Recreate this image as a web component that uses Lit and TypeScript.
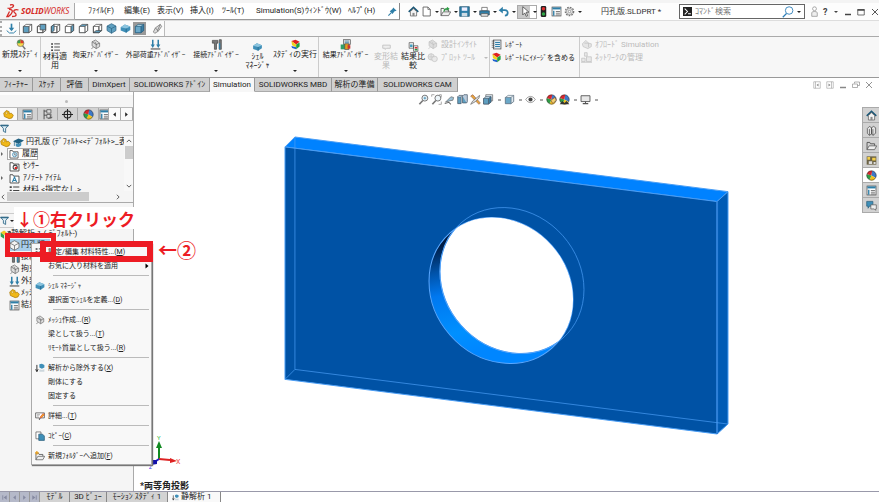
import { LitElement, html, css, svg } from "lit";
import { customElement, property } from "lit/decorators.js";
import { classMap } from "lit/directives/class-map.js";

const B = "#2f7fa8";
const K = "#444";
const cube = (f: string, t: string, r: string, s: string) => svg`
  <path d="M2 5 L6 2 H14 V11 L10 14 H2Z" fill="${t}" stroke="${s}"/>
  <path d="M10 5 L14 2 V11 L10 14Z" fill="${r}" stroke="${s}"/>
  <path d="M2 5 H10 V14 H2Z" fill="${f}" stroke="${s}"/>`;
const iso = (f: string, s: string) => svg`
  <path d="M8 1 L14.500 4.500 V11 L8 15 L1.500 11 V4.500Z" fill="${f}" stroke="${s}"/>
  <path d="M1.500 4.500 L8 8 L14.500 4.500 M8 8 V15" fill="none" stroke="${s}"/>`;
const ball = svg`
  <path d="M8 8 L1.200 6 A7 7 0 0 1 9 1.100Z" fill="#d8262c"/>
  <path d="M8 8 L9 1.100 A7 7 0 0 1 14 11.500Z" fill="#3c78c8"/>
  <path d="M8 8 L14 11.500 A7 7 0 0 1 5 14.300Z" fill="#f2c21c"/>
  <path d="M8 8 L5 14.300 A7 7 0 0 1 1.200 6Z" fill="#2f9e46"/>
  <circle cx="8" cy="8" r="6.800" fill="none" stroke="#333" stroke-width=".8"/>`;
const lines = svg`<path d="M1 3h3M1 8h3M1 13h3" stroke="${K}" stroke-width="2.400"/><path d="M6 3h9M6 8h9M6 13h9" stroke="${K}" stroke-width="1.500"/>`;
const sheet = svg`<rect x="1.500" y="1.500" width="13" height="13" fill="#fff" stroke="${K}"/><path d="M2 3.500h12" stroke="${B}" stroke-width="3"/><path d="M4 7v7" stroke="${B}" stroke-width="2"/><path d="M7 8h6M7 10.500h6M7 13h6" stroke="${K}"/>`;
const clampPart = (c: string) => svg`<path d="M3 4 L8 1.500 L14 6 L14 11 L9 14 L3 10Z" fill="#ddd" stroke="${c}"/><path d="M3 4 L9 8 L14 6 M9 8 V14 M5 12 L2 14 M7 4 L10 9" fill="none" stroke="${c}"/>`;
const loads = svg`<path d="M4 1v9M12 1v9" stroke="${B}" stroke-width="2.200"/><path d="M1 8h6l-3 5zM9 8h6l-3 5z" fill="${B}"/><path d="M1 14.500h14" stroke="${K}" stroke-width="1.500"/>`;
const bolts = svg`<path d="M2 2h8v4h-2v9h-3V6H2zM12 1h3v14h-3z" fill="#777" stroke="${K}"/><path d="M12.500 6v9" stroke="${B}" stroke-width="2"/>`;
const heat = svg`<path d="M2 3 L8 1 L14 4 L9 8Z" fill="#e02020"/><path d="M2 3 L9 8 V12 L3 9Z" fill="#f0d020"/><path d="M9 8 L14 5 V11 L9 15Z" fill="#20a040"/><path d="M2 10 L9 12 V15 L3 13Z" fill="#2060d0"/>`;
const folder = (m: unknown) => svg`<path d="M1.500 2.500h4l1 2h8v10h-13z" fill="#fff" stroke="${K}" stroke-width="1.300"/>${m}`;
const openFolder = svg`<path d="M1.500 14V3.500h4l1 2h6v3" fill="none" stroke="${K}" stroke-width="1.200"/><path d="M4.500 8.500h11l-3 5.500h-11z" fill="#eee" stroke="${K}"/>`;
const part = svg`<path d="M1 6 L5 2 L9 4 L9 7 L12 6 L15 9 L13 13 L9 14 L2 11Z" fill="#f0b818" stroke="#a87400"/><circle cx="5" cy="6" r="1.500" fill="#fff3b0" stroke="#a87400" stroke-width=".7"/>`;
const glass = svg`<circle cx="10" cy="6" r="4.300" fill="#eef6fa" stroke="#777" stroke-width="1.400"/><path d="M7 9.500 L2 15" stroke="#777" stroke-width="2.400"/>`;

const ICONS: Record<string, unknown> = {
  down: svg`<path d="M8 1v9" stroke="${B}" stroke-width="2.400"/><path d="M4 7h8l-4 5z" fill="${B}"/><path d="M1 11 L5 14.500 H11 L15 11" fill="none" stroke="${B}" stroke-width="1.400"/>`,
  cFront: cube("#5f9fc0", "#fff", "#fff", K),
  cBack: svg`${cube("none", "#fff", "#fff", K)}<path d="M6 2h8v8H6z" fill="#5f9fc0" stroke="${K}"/>`,
  cLeft: svg`${cube("none", "#fff", "#fff", K)}<path d="M2 5l4-3v9l-4 3z" fill="#5f9fc0" stroke="${K}"/>`,
  cRight: cube("#fff", "#fff", "#5f9fc0", K),
  cTop: cube("#fff", "#5f9fc0", "#fff", K),
  cBottom: svg`${cube("none", "#fff", "#fff", K)}<path d="M2 14l4-3h8l-4 3z" fill="#5f9fc0" stroke="${K}"/>`,
  cIso: iso("#5fa0c0", "#285f80"),
  cSolid: cube("#6aa8c8", "#a8cfe0", "#3a7fa4", "#285f80"),
  normal: svg`<path d="M2 13 L5 7 L12 2 L14 5 L9 12 L4 15Z" fill="#ddd" stroke="#666"/><path d="M5 7 l4 5M12 2l-4 9" stroke="#666" fill="none"/>`,
  study: svg`<circle cx="8" cy="6" r="5" fill="#f5d94a"/><path d="M3 6a5 5 0 0 1 5-5l0 5z" fill="#3aa04c"/><path d="M8 1a5 5 0 0 1 5 5H8z" fill="#e03a2a"/><circle cx="8" cy="6" r="5" fill="none" stroke="#777"/><path d="M11 10l4 5" stroke="#777" stroke-width="2.200"/>`,
  lines, clamp: clampPart("#666"), loads, bolts, heat, sheet, part, ball, glass,
  shell: svg`<path d="M1 6 L7 2 L15 5 L15 10 L9 14 L1 11Z" fill="#3f8fb8"/><path d="M1 6 L7 2 L15 5 L9 8Z" fill="#8cc4de"/><path d="M9 8V14" stroke="#1f5f80"/>`,
  result: svg`<rect x="5" y="1" width="10" height="7" fill="#ddd" stroke="#555"/><path d="M7 3h6M7 5h6" stroke="${B}"/><rect x="1" y="8" width="6" height="7" fill="#2f9e6a"/><rect x="7" y="7" width="6" height="8" fill="#e0a020" stroke="#444"/><rect x="11" y="9" width="4" height="5" fill="#c33"/>`,
  deform: svg`<path d="M2 5h12v5h-6l-2 2v-2H2z" fill="#eee" stroke="#c4c4c4" stroke-width="1.500"/>`,
  compare: svg`<path d="M1 1h7v9H1zM8 6h7v9H8z" fill="#eee" stroke="#444"/><path d="M2.500 4h4v4h-4z" fill="#3f9ec0"/><path d="M10 8h4v2.500h-4z" fill="#d33"/><path d="M10 11h4v2.500h-4z" fill="#2a9a48"/>`,
  gInsight: clampPart("#c0c0c0"),
  gPlot: svg`<circle cx="6" cy="7" r="4.500" fill="#e5e5e5" stroke="#c0c0c0"/><circle cx="11" cy="10" r="4" fill="#e9e9e9" stroke="#c0c0c0"/><path d="M6 2v10M2 7h9" stroke="#c8c8c8"/>`,
  gCloud: svg`<path d="M2 7l5-5 4 4 4 1v4l-5 3-7-3z" fill="#e5e5e5" stroke="#c0c0c0"/><path d="M5 6h6v6" fill="none" stroke="#bbb"/>`,
  gNet: svg`<path d="M5 1h4v5H5zM1 9h5v5H1zM8 7h7v7H8z" fill="#e8e8e8" stroke="#bdbdbd"/><path d="M0 15h16" stroke="#bdbdbd"/>`,
  report: svg`<rect x="3.500" y="1.500" width="11" height="13" fill="#dfe9f0" stroke="${K}"/><path d="M1 3h4M1 6h4M1 9h4M1 12h4" stroke="${K}"/><path d="M6 5h7M6 8h7M6 11h7" stroke="${B}" stroke-width="1.500"/>`,
  home: svg`<path d="M1 8.500 L8 2 L15 8.500" fill="none" stroke="#1c5878" stroke-width="2.200"/><path d="M3.500 8v6.500h9V8L8 4z" fill="#f4f4f4" stroke="#555"/><path d="M6.500 14.500V10h3v4.500" fill="#888"/>`,
  page: svg`<path d="M3 1.500h7l3.500 3.500v9.500H3z" fill="#fff" stroke="#555" stroke-width="1.200"/><path d="M10 1.500V5h3.500" fill="none" stroke="#555"/>`,
  openf: svg`${openFolder}<path d="M10 1l4 3-4 3z" fill="#2f9e46"/><path d="M6 8c0-4 2-4 5-4" fill="none" stroke="#2f9e46" stroke-width="2"/>`,
  save: svg`<path d="M1 1h14v14H1z" fill="${B}" stroke="#1c4f6c"/><path d="M4 2h8v5H4z" fill="#eef"/><path d="M4 10h8v5H4z" fill="#cfdde6"/>`,
  print: svg`<path d="M4 2h8v5H4z" fill="#fff" stroke="#555"/><path d="M1 7h14v6H1z" fill="${B}" stroke="#345"/><path d="M3 11h10v4H3z" fill="#ddd" stroke="#555"/>`,
  undo: svg`<path d="M4 6h6c6 0 5 8 0 8" fill="none" stroke="${B}" stroke-width="2.600"/><path d="M1 6l6-5v10z" fill="${B}"/>`,
  cursor: svg`<path d="M4 1v12l3-3 2 5 2-1-2-5h4z" fill="#fff" stroke="#333"/>`,
  traffic: svg`<rect x="4" y="0" width="8" height="16" rx="2" fill="#222"/><circle cx="8" cy="4" r="2.500" fill="#e03030"/><circle cx="8" cy="11.500" r="2.500" fill="#30a848"/>`,
  gear: svg`<circle cx="8" cy="8" r="6" fill="none" stroke="#777" stroke-width="2" stroke-dasharray="2.500 1.500"/><circle cx="8" cy="8" r="4.500" fill="#eee" stroke="#777"/><circle cx="8" cy="8" r="1.800" fill="#fff" stroke="#777"/>`,
  pin: svg`<path d="M9 2l5 5-3 .5-3 4-4-4 4-3z" fill="${B}"/><path d="M6 10l-4 4" stroke="${B}" stroke-width="1.500"/>`,
  prompt: svg`<rect width="16" height="16" fill="#222"/><path d="M3 3l5 5-5 5M9 12h5" fill="none" stroke="#fff" stroke-width="1.800"/>`,
  find: svg`<circle cx="9.500" cy="6" r="5" fill="none" stroke="#2f7fb8" stroke-width="1.200"/><path d="M6 10l-5 5" stroke="#2f7fb8" stroke-width="1.600"/>`,
  person: svg`<circle cx="8" cy="4" r="2.800" fill="#fff" stroke="#888"/><path d="M4 15V9.500c1-2 7-2 8 0V15z" fill="#eee" stroke="#888"/>`,
  min: svg`<path d="M2 13h12" stroke="currentColor" stroke-width="3"/>`,
  max: svg`<path d="M1.500 3h13v11h-13z" fill="none" stroke="currentColor" stroke-width="1.500"/><path d="M1 4h14" stroke="currentColor" stroke-width="3"/>`,
  close: svg`<path d="M2 2l12 12M14 2L2 14" stroke="currentColor" stroke-width="1.800"/>`,
  restore: svg`<path d="M5 5V2h10v7h-4M1 6h10v7H1z" fill="none" stroke="currentColor" stroke-width="1.300"/>`,
  dockL: svg`<path d="M1.500 1.500h13v13h-13z" fill="none" stroke="currentColor"/><path d="M5 1.500v13" stroke="currentColor"/><path d="M11 5v6L7 8z" fill="currentColor"/>`,
  dockR: svg`<path d="M1.500 1.500h13v13h-13z" fill="none" stroke="currentColor"/><path d="M11 1.500v13" stroke="currentColor"/><path d="M5 5v6l4-3z" fill="currentColor"/>`,
  config: svg`<path d="M3 1v14M3 3h5M3 9h5" stroke="${K}" stroke-width="1.300"/><path d="M7 1h6v5H7zM7 8h5v5H7z" fill="#ddd" stroke="${K}"/><path d="M9 14l6-2M13 7v7" stroke="${K}"/>`,
  target: svg`<circle cx="8" cy="8" r="5" fill="none" stroke="#222" stroke-width="1.500"/><path d="M8 0v16M0 8h16" stroke="#222" stroke-width="1.500"/>`,
  funnel: svg`<path d="M1 2h14l-5 6v7l-4-2V8z" fill="#dfeef6" stroke="#2a6484" stroke-width="1.500"/><path d="M1 3h14" stroke="#2a6484" stroke-width="2"/>`,
  hat: svg`<path d="M0 6l8-4 8 3-8 5z" fill="#1f5f80"/><path d="M4 9v4c2 2 6 2 8-1V8l-4 2z" fill="#3f8fb8"/><path d="M2 7v6" stroke="#1f5f80"/>`,
  fHist: folder(svg`<circle cx="9" cy="9" r="3.500" fill="#cfe4ef" stroke="${B}"/><path d="M9 7v2l2 1" stroke="${K}" fill="none"/>`),
  fSens: folder(svg`<circle cx="9" cy="9" r="3" fill="#fff" stroke="#444" stroke-width="1.500"/><circle cx="10" cy="10" r="1.800" fill="#d22"/>`),
  fAnno: folder(svg`<path d="M5 13l3-7 3 7M6 11h4" fill="none" stroke="${B}" stroke-width="1.600"/>`),
  cubeG: svg`<g>${iso("#f4f4f4", "#555")}</g>`,
  z1: svg`${glass}<path d="M8 6h4M10 4v4" stroke="${B}"/>`,
  z2: svg`<g>${glass}</g><path d="M1 4V1h4M12 1h3v4M15 11v4h-4" fill="none" stroke="#888"/>`,
  z3: svg`<path d="M2 12l8-8 4 1-1 4-5 1z" fill="#9cc3d8" stroke="#666"/><path d="M1 14l6-2 3 3" fill="none" stroke="#666" stroke-width="1.500"/>`,
  section: svg`<path d="M1 4h5v10H1zM8 3h6v10H8z" fill="#5f9fc0" stroke="#456"/><path d="M1 4l2-2h5l-2 2M8 3l2-2h5v10l-1 2" fill="#bcd" stroke="#456"/>`,
  wrench: svg`<path d="M1 3l12 12 2-2L4 1z" fill="#e9a63a" stroke="#965"/><path d="M14 2l-5 4-5 4-3 5 7-4 5-5z" fill="#ddd" stroke="#666"/>`,
  views: svg`<path d="M4 1h10v9H4z" fill="#dde9f0" stroke="#666"/><g transform="translate(-1 2) scale(.9)">${cube("#5f9fc0", "#bcd8e6", "#3a7fa4", "#456")}</g>`,
  style: cube("#6aa8c8", "#eef4f8", "#dfeaf0", "#678"),
  eye: svg`<path d="M1 8c4-6 10-6 14 0-4 6-10 6-14 0z" fill="#fff" stroke="#777"/><circle cx="8" cy="8" r="3" fill="#444"/>`,
  paint: svg`${ball}<path d="M7 9l6-4 2 4-5 5z" fill="#f2cf70" stroke="#853"/>`,
  scene: svg`<g>${ball}</g><path d="M1 15l4-5 3 3 3-3 4 5z" fill="#333"/>`,
  monitor: svg`<path d="M1.500 2.500h13v8.500h-13z" fill="#e8e8e8" stroke="#555" stroke-width="1.300"/><path d="M8 11v3M4 14h8" stroke="#555" stroke-width="1.500"/>`,
  books: svg`<path d="M2 5l3-3 3 2v9l-3 2-3-3zM8 4l3-2 3 2v8l-4 3-2-2z" fill="#e4e4e4" stroke="#444"/><path d="M5 6v9M10 6v9" stroke="#444"/>`,
  openFolder,
  palette: svg`<rect x="1" y="2" width="14" height="12" fill="#6b6245"/><path d="M2 3h4v4H2zM9 4h5v4H9z" fill="#f3cf4c"/><path d="M4 9h5v4H4zM11 10h3v3h-3z" fill="#ddd"/>`,
  chat: svg`<path d="M1 2h9v7H5l-2 3V9H1z" fill="#3f8fb8" stroke="#265a78"/><path d="M7 7h8v6h-1v2l-2-2H7z" fill="#eee" stroke="#555"/>`,
  exclude: svg`<path d="M3 3v10M1 10l2 4 2-4" stroke="#222" stroke-width="1.400" fill="none"/><path d="M7 2l4-1 4 2v4l-4 2-4-2z" fill="#3f8fb8"/><path d="M7 10l4 1 4-1v4H7z" fill="#ccd6dc"/>`,
  detail: svg`<path d="M1 3h14v8H9l-2 3v-3H1z" fill="#fff" stroke="#555" stroke-width="1.300"/><path d="M8 10l5-6 2 2-5 5z" fill="#f0b818" stroke="#d33"/><path d="M3 6h5M3 8h3" stroke="#777"/>`,
  copy: svg`<path d="M1.500 1.500h8v11h-8z" fill="#fff" stroke="#444"/><path d="M6 5h6l3 3v7H6z" fill="#3f8fb8" stroke="#1d4f6c"/>`,
  newFolder: svg`${openFolder}<path d="M3 0v6M0 3h6" stroke="#e8a020" stroke-width="2"/>`,
  studyRoot: svg`<path d="M1 5l5-3 4 3-4 4z" fill="#f0c828"/><path d="M1 5l5 4v5l-5-3z" fill="#2fa050"/><path d="M9 15l5-12M11 4h4v4" stroke="#333" stroke-width="1.500" fill="none"/>`,
  prev: svg`<path d="M11 3v10L5 8z" fill="currentColor"/>`,
  next: svg`<path d="M5 3v10l6-5z" fill="currentColor"/>`,
  first: svg`<path d="M13 3v10L6 8z" fill="currentColor"/><path d="M4 3v10" stroke="currentColor" stroke-width="2"/>`,
  final: svg`<path d="M3 3v10l7-5z" fill="currentColor"/><path d="M12 3v10" stroke="currentColor" stroke-width="2"/>`,
  up: svg`<path d="M2 11l6-6 6 6" fill="none" stroke="currentColor" stroke-width="2.500"/>`,
  dn: svg`<path d="M2 5l6 6 6-6" fill="none" stroke="currentColor" stroke-width="2.500"/>`,
  lt: svg`<path d="M11 2L5 8l6 6" fill="none" stroke="currentColor" stroke-width="2.500"/>`,
  gt: svg`<path d="M5 2l6 6-6 6" fill="none" stroke="currentColor" stroke-width="2.500"/>`,
};

@customElement("cad-icon")
class CadIcon extends LitElement {
  @property() name = "";
  static styles = css`
    :host { display: inline-block; width: 11px; height: 11px; flex: none; }
    svg { display: block; width: 100%; height: 100%; }
  `;
  render() {
    return html`<svg viewBox="0 0 16 16" aria-hidden="true">${ICONS[this.name]}</svg>`;
  }
}

const MENUS = ["ﾌｧｲﾙ(F)", "編集(E)", "表示(V)", "挿入(I)", "ﾂｰﾙ(T)", "Simulation(S)", "ｳｨﾝﾄﾞｳ(W)", "ﾍﾙﾌﾟ(H)"];
const QUICK: [string, boolean][] = [["home", false], ["page", true], ["openf", true], ["save", true], ["print", true], ["undo", true]];
const CUBES = ["down", "cFront", "cBack", "cLeft", "cRight", "cTop", "cBottom", "cIso", "shell", "cSolid", "normal"];
const CMDS: { i: string; t: string[]; a?: boolean; low?: boolean; off?: boolean; end?: boolean; wide?: boolean }[] = [
  { i: "study", t: ["新規ｽﾀﾃﾞｨ"], a: true, end: true },
  { i: "lines", t: ["材料適", "用"], low: true },
  { i: "clamp", t: ["拘束ｱﾄﾞﾊﾞｲｻﾞｰ"], a: true, wide: true },
  { i: "loads", t: ["外部荷重ｱﾄﾞﾊﾞｲｻﾞｰ"], a: true, wide: true },
  { i: "bolts", t: ["接続ｱﾄﾞﾊﾞｲｻﾞｰ"], a: true, wide: true },
  { i: "shell", t: ["ｼｪﾙ", "ﾏﾈｰｼﾞｬ"], low: true },
  { i: "heat", t: ["ｽﾀﾃﾞｨの実行"], a: true, end: true },
  { i: "result", t: ["結果ｱﾄﾞﾊﾞｲｻﾞｰ"], a: true, wide: true },
  { i: "deform", t: ["変形結", "果"], low: true, off: true },
  { i: "compare", t: ["結果比", "較"], low: true },
];
const TABS = ["ﾌｨｰﾁｬｰ", "ｽｹｯﾁ", "評価", "DimXpert", "SOLIDWORKS ｱﾄﾞｲﾝ", "Simulation", "SOLIDWORKS MBD", "解析の準備", "SOLIDWORKS CAM"];
const STUDY_TREE: [string, string][] = [["cubeG", "円孔版"], ["bolts", "接続"], ["clamp", "拘束"], ["loads", "外部"], ["part", "ﾒｯｼｭ"], ["sheet", "結果"]];
type Item = { i?: string; t: string; k?: string; sub?: boolean };
const CONTEXT: Item[][] = [
  [{ i: "lines", t: "設定/編集 材料特性...", k: "M" }, { t: "お気に入り材料を適用", sub: true }],
  [{ i: "shell", t: "ｼｪﾙ ﾏﾈｰｼﾞｬ" }, { t: "選択面でｼｪﾙを定義...", k: "D" }],
  [{ i: "clamp", t: "ﾒｯｼｭ作成...", k: "R" }, { t: "梁として扱う...", k: "T" }, { t: "ﾘﾓｰﾄ質量として扱う...", k: "R" }],
  [{ i: "exclude", t: "解析から除外する", k: "X" }, { t: "剛体にする" }, { t: "固定する" }],
  [{ i: "detail", t: "詳細...", k: "T" }],
  [{ i: "copy", t: "ｺﾋﾟｰ", k: "C" }],
  [{ i: "newFolder", t: "新規ﾌｫﾙﾀﾞｰへ追加", k: "F" }],
];
const VIEWS = ["z1", "z2", "z3", "section", "wrench", "views", ".", "style", ".", "eye", ".", "paint", "scene", ".", "monitor", "."];

@customElement("app-root")
class AppRoot extends LitElement {
  static styles = css`
    :host {
      display: grid; grid-template-columns: minmax(0, 1fr); grid-template-rows: auto auto auto auto 1fr auto;
      height: 100vh; position: relative; overflow: hidden; background: #fff; color: #222;
      font: 8px/10px Roboto, "Noto Sans CJK JP", sans-serif;
    }
    * { box-sizing: border-box; }
    button { font: inherit; color: inherit; background: none; border: 0; padding: 0; margin: 0; text-align: left; white-space: nowrap; }
    .title { display: flex; align-items: stretch; height: 21px; background: #fdfdfd; border-top: 3px solid #f4f4f4; border-bottom: 1px solid #ddd; }
    .title > * { flex: none; }
    .brand { display: flex; align-items: center; width: 75px; padding-left: 6px; gap: 2px; background: #f4f4f4; border-right: 1px solid #aaa; border-bottom: 1px solid #aaa; color: #d52b27; }
    .brand svg { width: 13px; height: 14px; }
    .word { font: italic 8px/10px "Noto Sans", sans-serif; }
    .menus { display: grid; grid-template-columns: 36px 33px 33px 32px 34px 49px 43px 39px 12px; width: 325px; padding-left: 13px; align-items: center; border-right: 1px solid #888; border-bottom: 1px solid #999; background: #fff; }
    .quick { display: flex; align-items: center; padding-left: 8px; width: 183px; }
    .quick button { display: flex; align-items: center; width: 13px; }
    .quick button.arrowed { width: 20px; gap: 3px; }
    .quick button.pick { width: 20px; height: 14px; padding: 0 2px; background: linear-gradient(90deg, #c8c8c8 12px, #fff 12px); border: 1px solid #aaa; margin-right: 1px; gap: 2px; }
    .tri { width: 0; height: 0; border: 2px solid transparent; border-top-color: currentColor; border-bottom: 0; flex: none; }
    .doc { width: 96px; padding-left: 18px; display: flex; align-items: center; color: #333; white-space: nowrap; }
    .title .search { display: flex; align-items: center; flex: 1 1 0; min-width: 0; gap: 3px; padding: 0 3px; margin: 1px 4px 1px 0; border: 1px solid #666; background: #fff; }
    .search cad-icon { width: 9px; height: 9px; }
    .search cad-icon.find { width: 12px; height: 12px; }
    .search input { flex: 1; min-width: 0; border: 0; padding: 0; outline: 0; font: inherit; background: none; }
    .search input::placeholder { color: #777; }
    .win { display: grid; grid-template-columns: 13px 12px 10px 13px 14px 8px; align-items: center; width: 70px; color: #444; }
    .win cad-icon { width: 8px; height: 8px; }
    .win cad-icon.person { width: 11px; height: 11px; }
    .help { font-size: 9px; font-weight: 700; padding-left: 1px; }
    .cubes { display: flex; height: 15px; background: #f7f7f7; }
    .cubeset { display: flex; align-items: center; gap: 1px; width: 165px; padding-left: 3px; border-right: 1px solid #bbb; border-left: 2px dotted #aaa; background: #fbfbfb; }
    .cubeset button { width: 13px; height: 13px; padding: 1px; }
    .cubeset button.first { width: 16px; border-right: 1px solid #aaa; }
    .cubeset button.on { background: #999; }
    .cubeset button.last { margin-left: 4px; }
    .ribbon { display: grid; grid-template-columns: 41px 28px 53px 67px 54px 29px 47px 53px 28px 26px 64px 90px 1fr; height: 42px; background: #f7f7f7; border-top: 1px solid #aaa; border-bottom: 1px solid #999; }
    .cmd { display: flex; flex-direction: column; align-items: center; text-align: center; padding-top: 2px; line-height: 10px; }
    .cmd .label { display: flex; flex-direction: column; align-items: center; }
    .cmd.wide .label { font-size: 7px; }
    .cmd.low { padding-top: 5px; line-height: 9px; }
    .cmd.low cad-icon { height: 10px; }
    .cmd.end { border-right: 1px solid #ccc; }
    .cmd .tri { margin-top: 10px; }
    .off { color: #bbb; }
    .stack { display: flex; flex-direction: column; padding-top: 1px; border-right: 1px solid #ccc; padding-left: 1px; }
    .stack button { display: flex; align-items: center; gap: 3px; height: 13px; }
    .stack button .tri { margin-left: 6px; }
    .stack.report { font-size: 7px; }
    .stack.free { border: 0; }
    .tabs { display: flex; height: 14px; background: #fff; }
    .tabs button { height: 14px; text-align: center; background: #d0d0d0; border-right: 1px solid #999; border-bottom: 1px solid #aaa; flex: none; }
    .tabs button:nth-child(1) { width: 33px; }
    .tabs button:nth-child(2), .tabs button:nth-child(3) { width: 28px; }
    .tabs button:nth-child(4) { width: 41px; }
    .tabs button:nth-child(5) { width: 80px; }
    .tabs button:nth-child(6) { width: 45px; }
    .tabs button:nth-child(7) { width: 77px; }
    .tabs button:nth-child(8) { width: 46px; }
    .tabs button:nth-child(9) { width: 80px; }
    .tabs button.on { background: #f7f7f7; border-bottom-color: #f7f7f7; }
    .docwin { display: flex; gap: 5px; align-items: center; margin-left: auto; padding-right: 6px; color: #888; }
    .docwin cad-icon { width: 8px; height: 8px; }
    .main { display: grid; grid-template-columns: 134px minmax(0, 1fr); min-height: 0; }
    .side { background: #f5f5f5; border-right: 1px solid #aaa; min-height: 0; overflow: hidden; }
    .grip { height: 15px; border-top: 3px solid #fdfdfd; display: grid; place-items: center; }
    .grip::after { content: ""; width: 3px; height: 3px; border-radius: 50%; background: #bbb; }
    .ptabs { display: grid; grid-template-columns: 18px 20px 20px 20px 21px 10px 12px 12px; height: 14px; border-top: 1px solid #bbb; border-bottom: 1px solid #bbb; }
    .ptabs button { display: grid; place-items: center; background: #d3d3d3; border-right: 1px solid #aaa; overflow: hidden; }
    .ptabs button.on, .ptabs button.nav { background: #fafafa; }
    .ptabs .nav cad-icon { width: 7px; height: 7px; }
    .filter { height: 15px; display: flex; align-items: center; border-bottom: 1px solid #ccc; }
    .filter cad-icon { width: 9px; height: 9px; }
    .features { display: grid; grid-template-columns: minmax(0, 1fr) 9px; height: 55px; }
    .rows { overflow: hidden; }
    .row { display: flex; align-items: center; width: 100%; height: 12px; gap: 2px; }
    .row.sub { padding-left: 1px; gap: 3px; }
    .twist { width: 5px; height: 4px; border: 2px solid transparent; border-left-color: #666; border-right: 0; width: 2px; margin-right: 3px; }
    .twist.none { border-color: transparent; }
    .framed { border: 1px solid #aaa; background: #fff; width: 31px; height: 12px; display: flex; align-items: center; gap: 3px; padding-left: 1px; margin-left: -2px; }
    .framed cad-icon { width: 10px; height: 10px; }
    .vbar { display: flex; flex-direction: column; align-items: center; background: #f8f8f8; color: #555; gap: 2px; padding: 2px 0; }
    .vbar cad-icon, .hbar cad-icon { width: 6px; height: 6px; }
    .vbar .thumb { width: 8px; height: 13px; background: #ccc; }
    .vbar .low { margin-top: auto; }
    .hbar { display: flex; align-items: center; height: 11px; color: #555; padding-right: 12px; gap: 1px; }
    .hbar .thumb { width: 82px; height: 9px; background: #ccc; }
    .hbar .right { margin-left: auto; }
    .split { height: 12px; border-top: 1px solid #aaa; border-bottom: 1px solid #ccc; }
    .second { height: 14px; gap: 1px; }
    .study .row.sub { padding-left: 9px; gap: 1px; }
    .study .row.on { background: linear-gradient(90deg, transparent 8px, #a8cdea 8px, #a8cdea 50px, transparent 50px); }
    .study .row:first-child { gap: 0; height: 10px; }
    .study { font-size: 8px; padding-top: 1px; }
    .view { position: relative; display: grid; place-items: center; min-width: 0; min-height: 0; padding-bottom: 12px; }
    .model { width: 60%; max-width: 900px; display: block; }
    .hud { position: absolute; top: 2px; left: 284px; display: flex; align-items: center; gap: 2px; }
    .hud .dot { width: 3px; height: 2px; background: #aaa; margin: 0 1px 0 2px; }
    .tasks { position: absolute; top: 15px; right: 0; width: 17px; display: grid; background: #aaa; gap: 1px; padding: 1px 0 1px 1px; }
    .tasks button { height: 14px; display: grid; place-items: center; background: #d2d2d2; }
    .tasks button.on { background: #fff; }
    .triad { position: absolute; left: 12px; bottom: 20px; width: 36px; height: 36px; overflow: visible; }
    .caption { position: absolute; left: 6px; bottom: 0; font-size: 9px; font-weight: 700; line-height: 10px; }
    .bottom { display: flex; height: 11px; background: #fff; border-top: 1px solid #99a; }
    .bottom button { height: 10px; text-align: center; background: #d3d3d3; border-right: 1px solid #888; flex: none; }
    .bottom button.step { width: 10px; display: grid; place-items: center; background: #b5b9c9; color: #8488a0; border-color: #999; }
    .bottom button.t1 { width: 30px; }
    .bottom button.t2 { width: 37px; }
    .bottom button.t3 { width: 61px; }
    .bottom button.t4 { width: 53px; background: #f9f9f9; display: flex; align-items: center; gap: 2px; padding-left: 4px; }
    .bottom cad-icon { width: 7px; height: 7px; }
    .context { position: absolute; left: 31px; top: 243px; width: 121px; background: #f8f8f8; border: 1px solid #aaa; box-shadow: 1px 1px 1px #777; padding: 1px 0; font-size: 7px; }
    .group + .group { padding-top: 6px; background: linear-gradient(#bbb, #bbb) 21px 2px / 96px 1px no-repeat; }
    .context button { display: grid; grid-template-columns: 13px 1fr 8px; align-items: center; width: 100%; height: 14px; padding-left: 3px; }
    .context cad-icon { width: 10px; height: 10px; }
    .context .text { grid-column: 2; }
    .context cad-icon.more { width: 8px; height: 8px; color: #000; }
    .note { position: absolute; color: #ed1c24; font: 700 18px/20px "Noto Sans CJK JP", sans-serif; white-space: nowrap; }
    .note.one { left: 14px; top: 207px; width: 122px; height: 22px; background: #fff; padding-left: 2px; line-height: 24px; font-size: 17px; }
    .note.two { left: 158px; top: 240px; font-size: 19px; }
    .mark { position: absolute; border: 6px solid #ed1c24; }
    .mark.one { left: 5px; top: 233px; width: 51px; height: 24px; border-width: 5px; }
    .mark.two { left: 40px; top: 241px; width: 113px; height: 21px; }
  `;

  private tri = html`<span class="tri"></span>`;

  private model() {
    return html`<svg class="model" viewBox="281 134 450 301" role="img" aria-label="円孔版">
      <defs>
        <clipPath id="front"><ellipse cx="0" cy="0" rx="72.500" ry="72.900" transform="matrix(1 .126 0 1 500.500 289.500)"/></clipPath>
        <linearGradient id="bore" x1="0" y1="0" x2=".35" y2="1">
          <stop offset="0.240" stop-color="#001c44"/><stop offset=".4" stop-color="#0052a8"/>
          <stop offset=".55" stop-color="#0078f0"/><stop offset=".8" stop-color="#0090ff"/><stop offset=".95" stop-color="#0086ff"/>
        </linearGradient>
      </defs>
      <g stroke="#4a9df5" stroke-linejoin="round">
        <path d="M283 145 L293 135 L729 190 L718 200Z" fill="#0082ff"/>
        <path d="M718 200 L729 190 V424 L718 434Z" fill="#005bb5"/>
        <path d="M283 145 L718 200 V434 L283 379Z" fill="#0052a5"/>
        <path d="M718 200 V434" stroke="#2f80d8" stroke-width="2"/>
        <path d="M293 135 V369 L729 424 M293 369 L283 379" fill="none" stroke-width=".7"/>
      </g>
      <ellipse rx="72.500" ry="72.900" transform="matrix(1 .126 0 1 500.500 289.500)" fill="url(#bore)" stroke="#5aa8ff"/>
      <g clip-path="url(#front)"><ellipse rx="72.500" ry="72.900" transform="matrix(1 .126 0 1 511.500 279.500)" fill="#fff" stroke="#5aa8ff"/></g>
      <ellipse rx="72.500" ry="72.900" transform="matrix(1 .126 0 1 511.500 279.500)" fill="none" stroke="#4a9df5" stroke-width=".7"/>
    </svg>`;
  }

  private triad() {
    return html`<svg class="triad" viewBox="0 0 36 36" aria-hidden="true">
      <path d="M13 24V10" stroke="#128a22" stroke-width="2"/><path d="M13 6l-3 7h6z" fill="#128a22"/>
      <path d="M13 24l11 1" stroke="#d22" stroke-width="2"/><path d="M31 26l-7-3v5z" fill="#d22"/>
      <path d="M13 24l-3 2" stroke="#22c" stroke-width="2"/><path d="M5 30l2-5 4 0 0 4z" fill="#11a"/>
      <text x="11" y="5" font-size="6" fill="#3b4">Y</text><text x="30" y="29" font-size="7" fill="#e44">X</text><text x="3" y="34" font-size="5" fill="#33e">Z</text>
    </svg>`;
  }

  render() {
    return html`
      <header class="title">
        <div class="brand">
          <svg viewBox="0 0 26 28" aria-hidden="true" fill="none" stroke="#d52b27" stroke-width="2.600">
            <path d="M8 2c8-2 9 2 4 5-4 2-7 2-9 1"/><path d="M6 11c9-1 9 6-1 14H2l5-10"/><path d="M25 12c-7-2-12 1-8 5 5 4 5 8-5 8"/>
          </svg>
          <span class="word"><b>SOLID</b>WORKS</span>
        </div>
        <nav class="menus">${MENUS.map((m) => html`<button>${m}</button>`)}<cad-icon name="pin"></cad-icon></nav>
        <div class="quick">
          ${QUICK.map(([n, a]) => html`<button class=${classMap({ arrowed: a })} aria-label=${n}><cad-icon name=${n}></cad-icon>${a ? this.tri : ""}</button>`)}
          <button class="pick" aria-label="select"><cad-icon name="cursor"></cad-icon>${this.tri}</button>
          <button aria-label="rebuild"><cad-icon name="traffic"></cad-icon></button>
          <button aria-label="properties"><cad-icon name="sheet"></cad-icon></button>
          <button class="arrowed" aria-label="options"><cad-icon name="gear"></cad-icon>${this.tri}</button>
        </div>
        <div class="doc">円孔版.SLDPRT *</div>
        <label class="search"><cad-icon name="prompt"></cad-icon><input placeholder="ｺﾏﾝﾄﾞ検索" aria-label="ｺﾏﾝﾄﾞ検索" /><cad-icon class="find" name="find"></cad-icon>${this.tri}</label>
        <div class="win"><cad-icon class="person" name="person"></cad-icon><button class="help">?</button>${this.tri}
          <cad-icon name="min"></cad-icon><cad-icon name="max"></cad-icon><cad-icon name="close"></cad-icon></div>
      </header>
      <div class="cubes"><div class="cubeset">${CUBES.map((c, i) => html`<button aria-label=${c} class=${classMap({ first: i === 0, on: i === 9, last: i === 10 })}><cad-icon name=${c}></cad-icon></button>`)}</div></div>
      <div class="ribbon">
        ${CMDS.map((c) => html`<button class=${classMap({ cmd: true, low: !!c.low, off: !!c.off, end: !!c.end, wide: !!c.wide })}><cad-icon name=${c.i}></cad-icon><span class="label">${c.t.map((l) => html`<span>${l}</span>`)}</span>${c.a ? this.tri : ""}</button>`)}
        <div class="stack off"><button><cad-icon name="gInsight"></cad-icon>設計ｲﾝｻｲﾄ</button><button><cad-icon name="gPlot"></cad-icon>ﾌﾟﾛｯﾄ ﾂｰﾙ ${this.tri}</button></div>
        <div class="stack report"><button><cad-icon name="report"></cad-icon>ﾚﾎﾟｰﾄ</button><button><cad-icon name="heat"></cad-icon>ﾚﾎﾟｰﾄにｲﾒｰｼﾞを含める</button></div>
        <div class="stack free off"><button><cad-icon name="gCloud"></cad-icon>ｵﾌﾛｰﾄﾞ Simulation</button><button><cad-icon name="gNet"></cad-icon>ﾈｯﾄﾜｰｸの管理</button></div>
      </div>
      <div class="tabs">${TABS.map((t) => html`<button class=${classMap({ on: t === "Simulation" })}>${t}</button>`)}
        <div class="docwin">${["dockL", "dockR", "min", "restore", "close"].map((n) => html`<cad-icon name=${n}></cad-icon>`)}</div></div>
      <div class="main">
        <aside class="side">
          <div class="grip"></div>
          <div class="ptabs">${["part", "sheet", "config", "target", "ball", "sheet"].map((n, i) => html`<button aria-label=${n} class=${classMap({ on: i === 0 })}><cad-icon name=${n}></cad-icon></button>`)}${["prev", "next"].map((n) => html`<button class="nav" aria-label=${n}><cad-icon name=${n}></cad-icon></button>`)}</div>
          <div class="filter"><cad-icon name="funnel"></cad-icon></div>
          <div class="features">
            <div class="rows">
              <button class="row"><cad-icon name="part"></cad-icon><cad-icon name="hat"></cad-icon>円孔版 (ﾃﾞﾌｫﾙﾄ&lt;&lt;ﾃﾞﾌｫﾙﾄ&gt;_表</button>
              <button class="row sub"><span class="twist"></span><span class="framed"><cad-icon name="fHist"></cad-icon>履歴</span></button>
              <button class="row sub"><span class="twist none"></span><cad-icon name="fSens"></cad-icon>ｾﾝｻｰ</button>
              <button class="row sub"><span class="twist"></span><cad-icon name="fAnno"></cad-icon>ｱﾉﾃｰﾄ ｱｲﾃﾑ</button>
              <button class="row sub"><span class="twist none"></span><cad-icon name="lines"></cad-icon>材料 &lt;指定なし&gt;</button>
            </div>
            <div class="vbar"><cad-icon name="up"></cad-icon><span class="thumb"></span><cad-icon class="low" name="dn"></cad-icon></div>
          </div>
          <div class="hbar"><cad-icon name="lt"></cad-icon><span class="thumb"></span><cad-icon class="right" name="gt"></cad-icon></div>
          <div class="split"></div>
          <div class="filter second"><cad-icon name="funnel"></cad-icon>${this.tri}</div>
          <div class="study">
            <button class="row"><cad-icon name="studyRoot"></cad-icon>静解析 1 (-ﾃﾞﾌｫﾙﾄ-)</button>
            ${STUDY_TREE.map(([i, t], n) => html`<button class=${classMap({ row: true, sub: true, on: n === 0 })}><cad-icon name=${i}></cad-icon>${t}</button>`)}
          </div>
        </aside>
        <main class="view">
          ${this.model()}
          <div class="hud">${VIEWS.map((v) => (v === "." ? html`<span class="dot"></span>` : html`<cad-icon name=${v}></cad-icon>`))}</div>
          <div class="tasks">${["home", "books", "openFolder", "palette", "ball", "sheet", "chat"].map((n, i) => html`<button aria-label=${n} class=${classMap({ on: i === 4 })}><cad-icon name=${n}></cad-icon></button>`)}</div>
          ${this.triad()}
          <div class="caption">*両等角投影</div>
        </main>
      </div>
      <footer class="bottom">
        ${["first", "prev", "next", "final"].map((s) => html`<button class="step" aria-label=${s}><cad-icon name=${s}></cad-icon></button>`)}
        <button class="t1">ﾓﾃﾞﾙ</button><button class="t2">3D ﾋﾞｭｰ</button><button class="t3">ﾓｰｼｮﾝ ｽﾀﾃﾞｨ 1</button><button class="t4"><cad-icon name="exclude"></cad-icon>静解析 1</button>
      </footer>
      <div class="context" role="menu">
        ${CONTEXT.map((g) => html`<div class="group">${g.map((m) => html`<button role="menuitem">${m.i ? html`<cad-icon name=${m.i}></cad-icon>` : ""}<span class="text">${m.t}${m.k ? html`(<u>${m.k}</u>)` : ""}</span>${m.sub ? html`<cad-icon class="more" name="next"></cad-icon>` : ""}</button>`)}</div>`)}
      </div>
      <div class="note one">↓①右クリック</div>
      <div class="mark one"></div>
      <div class="mark two"></div>
      <div class="note two">←②</div>
    `;
  }
}
